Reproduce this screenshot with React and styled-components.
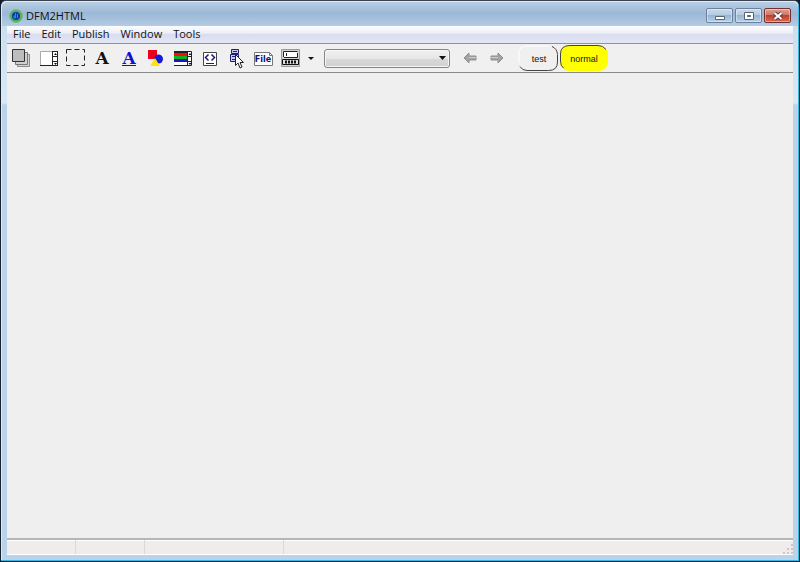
import React from "react";
import styled, { createGlobalStyle } from "styled-components";

const menus = ["File", "Edit", "Publish", "Window", "Tools"];

const PanelIcon = () => (
  <Icon>
    <path d="M6.500 6.500h12v12h-12z" fill="#d4d4d4" stroke="#8c8c8c" />
    <path d="M4.500 4.500h12v12h-12z" fill="#d0d0d0" stroke="#777" />
    <path d="M1.500 1.500h12v12h-12z" fill="#bdbdbd" stroke="#333" />
  </Icon>
);

const ScrollIcon = () => (
  <Icon>
    <path d="M2.500 3.500h17v14h-17z" fill="#fff" stroke="#aaa" />
    <path d="M2 17.500h18M14.500 3v15M19.500 3v15M14 3.500h6M14 8.500h6M14 13.500h6" stroke="#222" fill="none" />
    <path d="M16 7h3l-1.500-2zM16 15h3l-1.500 2z" fill="#111" />
  </Icon>
);

const DashedIcon = () => (
  <Icon>
    <path d="M1.500 1.500h18v16h-18z" fill="none" stroke="#222" strokeDasharray="5 3" />
  </Icon>
);

const LetterIcon = ({ link }) => (
  <Icon>
    <text
      x="10"
      y="16"
      textAnchor="middle"
      fontFamily="DejaVu Serif, serif"
      fontWeight="bold"
      fontSize="17"
      fill={link ? "#1010d0" : "#111"}
    >
      A
    </text>
    {link && <path d="M3 17.500h14" stroke="#1010d0" />}
  </Icon>
);

const ShapesIcon = () => (
  <Icon>
    <path d="M2 2h9v9H2z" fill="#f00018" />
    <circle cx="12.500" cy="11" r="4.500" fill="#1818d8" />
    <path d="M9 10l5 8H4z" fill="#ffe600" />
  </Icon>
);

const ColorsIcon = () => (
  <Icon>
    <path d="M1 3h18v15H1z" fill="#fff" />
    <path d="M1 5h13v3H1z" fill="#f01010" />
    <path d="M1 8h13v3H1z" fill="#10b020" />
    <path d="M1 11h13v3H1z" fill="#1818c8" />
    <path d="M1 4h13" stroke="#222" strokeWidth="2" />
    <path d="M14 3.500h4.500v14H1M14.500 3v15M14 8.500h5M14 13.500h5" stroke="#222" fill="none" />
    <path d="M15.500 7h3L17 5zM15.500 15h3L17 17z" fill="#111" />
  </Icon>
);

const CodeIcon = () => (
  <Icon>
    <path d="M3.500 4.500h13v13h-13z" fill="#fff" stroke="#444" />
    <path d="M8.500 6.500l-3 3 3 3M11.500 6.500l3 3-3 3" fill="none" stroke="#1c1c78" strokeWidth="1.500" />
    <path d="M6 15.500h8" stroke="#1c1c90" />
  </Icon>
);

const MenuIcon = () => (
  <Icon>
    <path d="M4.500 1.500h7v4h-7zM3.500 6.500h8v7h-8z" fill="#c8c8ee" stroke="#202060" />
    <path d="M6 3.500h4M5 8.500h5M5 11.500h4" stroke="#2020a0" />
    <path d="M8.500 6.500v11l2.500-2.500 2 5 2-1-2-4.500h3.500z" fill="#fff" stroke="#222" />
  </Icon>
);

const FileIcon = () => (
  <Icon>
    <path d="M.500 4.500h15l3 3v10h-18z" fill="#fff" stroke="#777" />
    <path d="M15.500 4.500v3h3" fill="none" stroke="#777" />
    <text
      x="9"
      y="14"
      textAnchor="middle"
      fontFamily="DejaVu Sans, sans-serif"
      fontWeight="bold"
      fontSize="8"
      fill="#10107c"
    >
      File
    </text>
  </Icon>
);

const FormIcon = () => (
  <Icon>
    <path d="M.500 1.500h18v17H.500z" fill="#d4d4d4" stroke="#999" />
    <path d="M3 4h13v5H3z" fill="#fff" />
    <path d="M2.500 9V3.500h14M5.500 5v3M3 9.500h13.500V5" fill="none" stroke="#222" />
    <path d="M1.500 11.500h16v5h-16z" fill="#ddd" stroke="#111" />
    <path d="M4 14h12" stroke="#111" strokeWidth="3" strokeDasharray="2 1" />
  </Icon>
);

const tools = [
  { name: "Panel", icon: <PanelIcon /> },
  { name: "Scroll panel", icon: <ScrollIcon /> },
  { name: "Frame", icon: <DashedIcon /> },
  { name: "Label", icon: <LetterIcon /> },
  { name: "Link", icon: <LetterIcon link /> },
  { name: "Image", icon: <ShapesIcon /> },
  { name: "Color list", icon: <ColorsIcon /> },
  { name: "HTML code", icon: <CodeIcon /> },
  { name: "Menu", icon: <MenuIcon /> },
  { name: "File field", icon: <FileIcon /> },
  { name: "Form", icon: <FormIcon /> },
];

const App = () => {
  return (
    <React.Fragment>
      <GlobalStyle />
      <AppWindow>
        <TitleBar>
          <Logo viewBox="0 0 14 14">
            <circle cx="7" cy="7" r="6.500" fill="#4fb35e" stroke="#7dbb8c" />
            <circle cx="7" cy="7" r="4" fill="#1238a8" />
            <path d="M6.500 4v5M6.500 7H5v2h1.500M8.500 5v4" fill="none" stroke="#2f8fc8" />
          </Logo>
          <Title>DFM2HTML</Title>
          <CaptionButton aria-label="Minimize">
            <Glyph viewBox="0 0 12 10">
              <path d="M1.500 5.500h9v3h-9z" fill="#fff" stroke="#566577" />
            </Glyph>
          </CaptionButton>
          <CaptionButton aria-label="Maximize">
            <Glyph viewBox="0 0 12 10">
              <path d="M1.500 1.500h9v7h-9z" fill="#fff" stroke="#566577" />
              <path d="M4.500 4.500h3v1h-3z" fill="#8ca8c4" stroke="#566577" />
            </Glyph>
          </CaptionButton>
          <CaptionButton $close aria-label="Close">
            <Glyph viewBox="0 0 12 10">
              <path d="M2.500 2l7 6M9.500 2l-7 6" stroke="#5c3a40" strokeWidth="4" />
              <path d="M2.500 2l7 6M9.500 2l-7 6" stroke="#fff" strokeWidth="2" />
            </Glyph>
          </CaptionButton>
        </TitleBar>
        <Client>
          <MenuBar>
            {menus.map((menu) => (
              <MenuButton key={menu}>{menu}</MenuButton>
            ))}
          </MenuBar>
          <ToolBar>
            {tools.map((tool) => (
              <ToolButton key={tool.name} aria-label={tool.name}>
                {tool.icon}
              </ToolButton>
            ))}
            <DropButton aria-label="More form fields">
              <Caret viewBox="0 0 6 3">
                <path d="M0 0h6L3 3z" fill="#111" />
              </Caret>
            </DropButton>
            <ComboBox>
              <Combo aria-label="Object" defaultValue="">
                <option value=""></option>
              </Combo>
              <ComboArrow viewBox="0 0 7 4">
                <path d="M0 0h7L3.500 4z" fill="#111" />
              </ComboArrow>
            </ComboBox>
            <NavButton aria-label="Back">
              <Arrow viewBox="0 0 14 12">
                <path d="M1 6l5-5v3h7v4H6v3z" fill="#a4a4a4" stroke="#8c8c8c" />
                <path d="M6 5.500h7" stroke="#ccc" />
              </Arrow>
            </NavButton>
            <NavButton aria-label="Forward">
              <Arrow viewBox="0 0 14 12">
                <path d="M13 6L8 1v3H1v4h7v3z" fill="#a4a4a4" stroke="#8c8c8c" />
                <path d="M1 5.500h7" stroke="#ccc" />
              </Arrow>
            </NavButton>
            <Modes>
              <ModeButton>
                <ModeEdge viewBox="0 0 42 27">
                  <path d="M1 18V9q0-8 8-8h22" fill="none" stroke="#fff" />
                  <path d="M34 1.500q5 2 5.500 8V17q0 8.500-9 8.500H9q-5 0-7-4" fill="none" stroke="#444" />
                </ModeEdge>
                <ModeText>test</ModeText>
              </ModeButton>
              <ModeButton $wide>
                <ModeEdge viewBox="0 0 48 27">
                  <rect width="48" height="26" rx="9" fill="#ff0" />
                  <path d="M3.500 23Q.500 21 .500 16V9Q.500.500 10 .500h28q5 0 8 4" fill="none" stroke="#444" />
                </ModeEdge>
                <ModeText>normal</ModeText>
              </ModeButton>
            </Modes>
          </ToolBar>
          <Workspace />
          <StatusBar>
            <StatusCell />
            <StatusCell />
            <StatusCell $wide />
            <Grip viewBox="0 0 10 10">
              <path d="M8 0h2v2H8zM8 4h2v2H8zM8 8h2v2H8zM4 4h2v2H4zM4 8h2v2H4zM0 8h2v2H0z" fill="#cbc8c8" />
            </Grip>
          </StatusBar>
        </Client>
      </AppWindow>
    </React.Fragment>
  );
};

const GlobalStyle = createGlobalStyle`
  * {
    box-sizing: border-box;
  }
  body {
    margin: 0;
    background: #101c2c;
    font-family: "Open Sans", "Noto Sans", sans-serif;
    font-size: 11px;
    color: #111;
  }
  button {
    padding: 0;
    border: 0;
    background: none;
    font: inherit;
    color: inherit;
  }
`;

const AppWindow = styled.div`
  display: flex;
  flex-direction: column;
  height: 100vh;
  padding: 0 6px 6px;
  border: 1px solid #16222e;
  border-top-color: #3c424c;
  border-radius: 6px 6px 0 0;
  background: linear-gradient(#c5dbee 0, #d9e8f5 102px, #b9d3ea 104px, #b9d3ea 100%);
  box-shadow: inset -1px -1px #35b9dc, inset 1px 1px #dcebf7;
`;

const TitleBar = styled.header`
  display: flex;
  align-items: center;
  flex: none;
  height: 25px;
  margin: 0 -5px;
  padding: 4px 7px 0 7px;
  border-radius: 5px 5px 0 0;
  background: linear-gradient(#b9d0e6, #9bb8d6 50%, #b4cce4);
  box-shadow: inset 0 1px #e2edf7;
`;

const Logo = styled.svg`
  width: 14px;
  height: 14px;
`;

const Title = styled.h1`
  flex: 1;
  margin: 0 0 0 3px;
  font-size: 11px;
  font-weight: 400;
  line-height: 16px;
`;

const CaptionButton = styled.button`
  && {
    border: 1px solid ${(props) => (props.$close ? "#722f34" : "#6c829c")};
    background: ${(props) =>
      props.$close
        ? "linear-gradient(#e0a090, #d07766 45%, #c0402c 50%, #d66b50)"
        : "linear-gradient(#c8d9ea, #b5cce2 45%, #98b5d2 50%, #b6d0e8)"};
  }
  display: flex;
  align-items: center;
  justify-content: center;
  width: 27px;
  height: 15px;
  margin-left: 2px;
  border-radius: 2px;
  box-shadow: inset 0 0 0 1px rgba(255, 255, 255, 0.4);
`;

const Glyph = styled.svg`
  width: 12px;
  height: 10px;
`;

const Client = styled.main`
  display: flex;
  flex: 1;
  flex-direction: column;
  min-height: 0;
  background: #efefef;
`;

const MenuBar = styled.nav`
  display: flex;
  flex: none;
  height: 18px;
  border-bottom: 1px solid #8e929b;
  background: linear-gradient(#fcfcfe, #eef0f8 40%, #d9ddef 50%, #e2e6f5);
`;

const MenuButton = styled.button`
  && {
    padding: 0 5px 2px 6px;
  }
  line-height: 15px;
`;

const ToolBar = styled.div`
  display: flex;
  align-items: center;
  flex: none;
  height: 29px;
  padding-left: 1px;
  border-bottom: 1px solid #8a8a8a;
  background: #f0f0f0;
`;

const ToolButton = styled.button`
  display: flex;
  justify-content: center;
  flex: none;
  width: 27px;
`;

const IconSvg = styled.svg`
  width: 21px;
  height: 21px;
`;

const Icon = ({ children }) => (
  <IconSvg viewBox="0 0 21 21" aria-hidden="true">
    {children}
  </IconSvg>
);

const DropButton = styled.button`
  display: flex;
  align-items: center;
  justify-content: center;
  width: 12px;
  height: 22px;
`;

const Caret = styled.svg`
  width: 6px;
  height: 3px;
`;

const ComboBox = styled.div`
  display: grid;
  align-items: center;
  width: 126px;
  margin: 0 6px 0 7px;
`;

const Combo = styled.select`
  grid-area: 1 / 1;
  width: 100%;
  height: 19px;
  border: 1px solid #858585;
  border-radius: 3px;
  appearance: none;
  background: linear-gradient(#f1f1f1, #e6e6e6 50%, #d9d9d9 52%, #d0d0d0);
  box-shadow: inset 0 0 0 1px #f6f6f6;
`;

const ComboArrow = styled.svg`
  grid-area: 1 / 1;
  justify-self: end;
  width: 7px;
  height: 4px;
  margin-right: 4px;
  pointer-events: none;
`;

const NavButton = styled.button`
  display: flex;
  justify-content: center;
  width: 27px;
`;

const Arrow = styled.svg`
  width: 14px;
  height: 12px;
`;

const Modes = styled.div`
  display: flex;
  margin-left: 8px;
`;

const ModeButton = styled.button`
  display: grid;
  width: ${(props) => (props.$wide ? "48px" : "42px")};
  height: 27px;
`;

const ModeEdge = styled.svg`
  grid-area: 1 / 1;
  width: 100%;
  height: 27px;
`;

const ModeText = styled.span`
  grid-area: 1 / 1;
  align-self: center;
  padding-top: 2px;
  font-family: "Liberation Sans", sans-serif;
  font-size: 9px;
`;

const Workspace = styled.section`
  flex: 1;
`;

const StatusBar = styled.footer`
  display: flex;
  flex: none;
  height: 17px;
  border-top: 2px solid #b5b5b5;
  border-bottom: 1px solid #fff;
  background: #f0ecec;
  box-shadow: inset 0 1px #fff;
`;

const StatusCell = styled.div`
  width: ${(props) => (props.$wide ? "139px" : "69px")};
  border-right: 1px solid #dcd8d8;
`;

const Grip = styled.svg`
  align-self: flex-end;
  width: 10px;
  height: 10px;
  margin-left: auto;
`;

export default App;
